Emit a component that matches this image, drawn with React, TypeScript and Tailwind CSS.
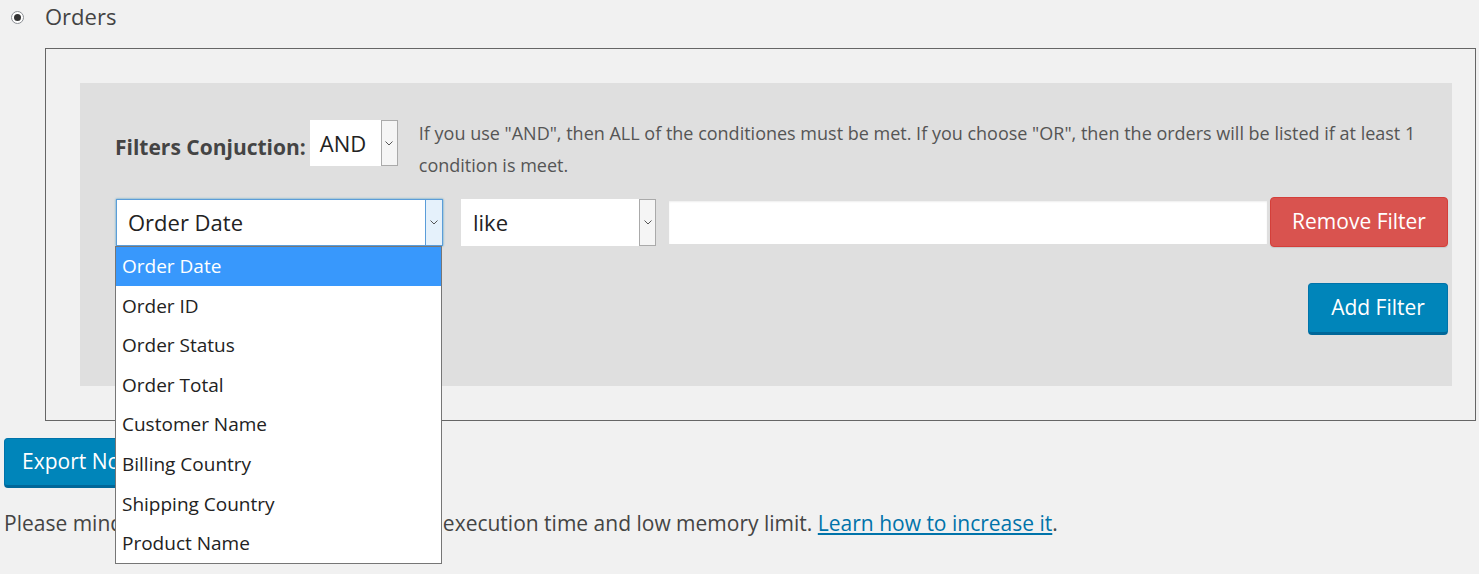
import React from "react";

const options = [
  "Order Date",
  "Order ID",
  "Order Status",
  "Order Total",
  "Customer Name",
  "Billing Country",
  "Shipping Country",
  "Product Name",
];

const Chevron = () => (
  <svg width="8" height="5" viewBox="0 0 8 5" fill="none">
    <path d="M0.5 0.5 L4 4 L7.5 0.5" stroke="#555" strokeWidth="1" />
  </svg>
);

const App = () => {
  return (
    <div className="min-h-screen bg-[#f1f1f1] font-['Open_Sans',sans-serif] text-[#32373c]">
      {/* Orders radio */}
      <div className="flex items-center h-[35px] pl-[11px]">
        <span className="w-[13px] h-[13px] rounded-full border border-[#8c8f94] bg-white flex items-center justify-center">
          <span className="w-[7px] h-[7px] rounded-full bg-[#333]" />
        </span>
        <span className="ml-[21px] mb-[4px] text-[22px] text-[#444] leading-none">Orders</span>
      </div>

      {/* Filters box */}
      <div className="ml-[45px] mr-[3px] mt-[13px] border border-[#666] pl-[34px] pr-[23px] py-[34px]">
        <div className="bg-[#dfdfdf] h-[303px] pl-[35px] pr-[4px] pt-[34px]">
          <div className="flex items-start">
            <span className="mt-[16px] text-[21px] leading-[28px] font-bold text-[#444]">Filters Conjuction:</span>
            <div className="ml-[4px] mt-[3px] w-[88px] h-[46px] flex bg-white">
              <span className="flex-1 pl-[10px] flex items-center text-[22px] text-[#222]">AND</span>
              <span className="w-[17px] border border-[#aaa] bg-[#f5f5f5] flex items-center justify-center">
                <Chevron />
              </span>
            </div>
            <p className="ml-[21px] flex-1 text-[18px] leading-[32px] text-[#555]">
              If you use "AND", then ALL of the conditiones must be met. If you choose "OR", then the orders will be listed if at least 1 condition is meet.
            </p>
          </div>

          <div className="flex items-center mt-[16px]">
            <div className="relative ml-[1px] w-[327px] h-[47px] flex bg-white border border-[#5b9dd9] shadow-[0_0_2px_rgba(30,140,190,0.8)]">
              <span className="flex-1 pl-[11px] flex items-center text-[22px] text-[#222]">Order Date</span>
              <span className="w-[17px] border-l border-[#5b9dd9] bg-[#e5f1fb] flex items-center justify-center">
                <Chevron />
              </span>
              <ul className="absolute left-[-2px] top-[46px] w-[327px] bg-white border border-[#767676] z-10">
                {options.map((o, i) => (
                  <li
                    key={o}
                    className={
                      "h-[39.6px] pl-[6px] flex items-center text-[19px] " +
                      (i === 0 ? "bg-[#3898fc] text-white" : "text-[#222]")
                    }
                  >
                    {o}
                  </li>
                ))}
              </ul>
            </div>
            <div className="ml-[18px] w-[195px] h-[47px] flex bg-white">
              <span className="flex-1 pl-[12px] flex items-center text-[22px] text-[#222]">like</span>
              <span className="w-[17px] border border-[#aaa] bg-[#f5f5f5] flex items-center justify-center">
                <Chevron />
              </span>
            </div>
            <input className="ml-[13px] flex-1 h-[43px] bg-white shadow-[inset_0_1px_2px_rgba(0,0,0,0.07)] outline-none" />
            <button className="ml-[3px] w-[178px] h-[50px] rounded-[4px] bg-[#d9534f] border border-[#d43f3a] text-white text-[21px] shadow-[0_1px_1px_rgba(0,0,0,0.1)]">
              Remove Filter
            </button>
          </div>

          <div className="flex justify-end mt-[36px]">
            <button className="w-[140px] h-[52px] rounded-[4px] bg-[#0085ba] border border-[#0073aa] border-b-[3px] border-b-[#006799] text-white text-[21px]">
              Add Filter
            </button>
          </div>
        </div>
      </div>

      <div className="pl-[4px] mt-[17px]">
        <button className="h-[50px] px-[17px] rounded-[4px] bg-[#0085ba] border border-[#0073aa] border-b-[3px] border-b-[#006799] text-white text-[21px]">
          Export Now
        </button>
        <p className="mt-[21px] text-[21px] leading-[28px] text-[#444]">
          Please mind that the export can fail with low execution time and low memory limit.{" "}
          <a href="#" className="text-[#0073aa] underline">Learn how to increase it</a>.
        </p>
      </div>
    </div>
  );
};

export default App;
